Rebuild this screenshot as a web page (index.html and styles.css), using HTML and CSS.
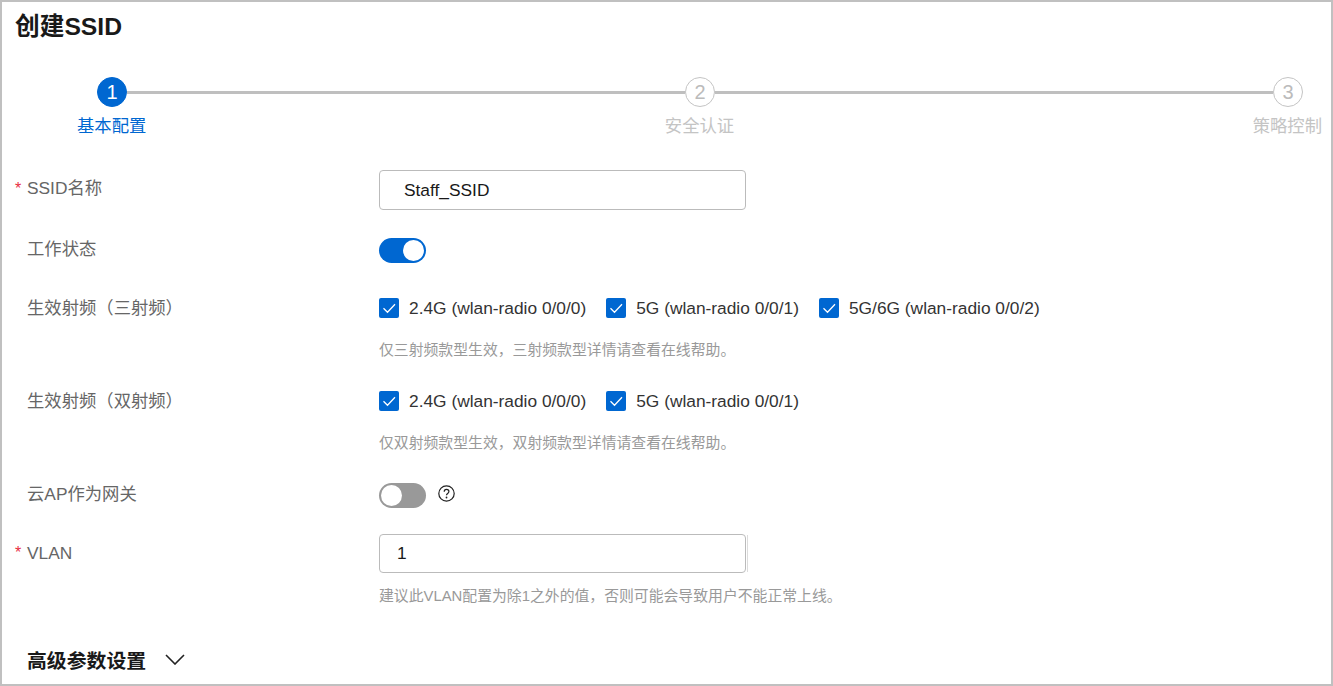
FILE: index.html
```html
<!DOCTYPE html>
<html lang="zh">
<head>
<meta charset="utf-8">
<title>创建SSID</title>
<link rel="stylesheet" href="styles.css">
</head>
<body>
<main class="frame">
  <h1 class="title">创建SSID</h1>
  <section class="stepper">
    <div class="track">
      <span class="dot dot-active">1</span>
      <span class="line"></span>
      <span class="dot">2</span>
      <span class="line"></span>
      <span class="dot">3</span>
    </div>
    <div class="step-labels">
      <span class="step-label step-label-active">基本配置</span>
      <span class="step-label">安全认证</span>
      <span class="step-label">策略控制</span>
    </div>
  </section>
  <form class="form">
    <div class="row row-name">
      <label class="label"><span class="req">*</span>SSID名称</label>
      <div class="control"><div class="input input-name">Staff_SSID</div></div>
    </div>
    <div class="row row-status">
      <label class="label">工作状态</label>
      <div class="control"><span class="switch switch-on"><i class="knob"></i></span></div>
    </div>
    <div class="row row-tri">
      <label class="label">生效射频（三射频）</label>
      <div class="control">
        <div class="checks">
          <span class="check"><svg class="box" viewBox="0 0 20 20"><path d="M4.5 10.2l4 4 7.5-8"/></svg>2.4G (wlan-radio 0/0/0)</span>
          <span class="check"><svg class="box" viewBox="0 0 20 20"><path d="M4.5 10.2l4 4 7.5-8"/></svg>5G (wlan-radio 0/0/1)</span>
          <span class="check"><svg class="box" viewBox="0 0 20 20"><path d="M4.5 10.2l4 4 7.5-8"/></svg>5G/6G (wlan-radio 0/0/2)</span>
        </div>
        <p class="hint">仅三射频款型生效，三射频款型详情请查看在线帮助。</p>
      </div>
    </div>
    <div class="row row-dual">
      <label class="label">生效射频（双射频）</label>
      <div class="control">
        <div class="checks">
          <span class="check"><svg class="box" viewBox="0 0 20 20"><path d="M4.5 10.2l4 4 7.5-8"/></svg>2.4G (wlan-radio 0/0/0)</span>
          <span class="check"><svg class="box" viewBox="0 0 20 20"><path d="M4.5 10.2l4 4 7.5-8"/></svg>5G (wlan-radio 0/0/1)</span>
        </div>
        <p class="hint">仅双射频款型生效，双射频款型详情请查看在线帮助。</p>
      </div>
    </div>
    <div class="row row-gateway">
      <label class="label">云AP作为网关</label>
      <div class="control control-inline">
        <span class="switch switch-off"><i class="knob"></i></span>
        <svg class="help" viewBox="0 0 17 17"><circle cx="8.5" cy="8.5" r="7.7"/><path d="M6.2 6.7c0-1.400 1-2.300 2.300-2.300s2.400.9 2.400 2.200c0 1.900-2.400 1.900-2.400 3.700"/><circle class="help-dot" cx="8.500" cy="12.500" r=".9"/></svg>
      </div>
    </div>
    <div class="row row-vlan">
      <label class="label"><span class="req">*</span>VLAN</label>
      <div class="control">
        <div class="vlan-wrap"><div class="input input-vlan">1</div><span class="spin-edge"></span></div>
        <p class="hint hint-vlan">建议此VLAN配置为除1之外的值，否则可能会导致用户不能正常上线。</p>
      </div>
    </div>
  </form>
  <div class="advanced">
    <h2 class="advanced-title">高级参数设置</h2>
    <svg class="chevron" viewBox="0 0 20 11"><path d="M1 1l9 9 9-9"/></svg>
  </div>
</main>
</body>
</html>
```
FILE: styles.css
```css
* { box-sizing: border-box; }
html, body { margin: 0; height: 100%; background: #fff; }
body {
  font-family: "Liberation Sans", "Noto Sans CJK SC", sans-serif;
  font-size: 16px;
  color: #333;
  overflow: hidden;
}
.frame {
  width: 1333px;
  height: 686px;
  border: 2px solid #c0c0c0;
  padding: 0 0 0 13px;
  overflow: hidden;
}
.title {
  margin: 0;
  height: 50px;
  line-height: 50px;
  font-size: 24.7px;
  font-weight: 700;
  color: #191919;
}
.stepper { margin: 25px 9px 0 62px; }
.track { display: flex; align-items: center; margin: 0 19px 0 20px; }
.dot {
  flex: none;
  width: 30px;
  height: 30px;
  border-radius: 50%;
  border: 1px solid #c4c4c4;
  color: #bbb;
  font-size: 20px;
  line-height: 28px;
  text-align: center;
  background: #fff;
}
.dot-active { background: #0067d1; border-color: #0067d1; color: #fff; }
.line { flex: 1; height: 3px; background: #bfbfbf; }
.step-labels { display: flex; justify-content: space-between; margin-top: 9px; }
.step-label { font-size: 17.33px; line-height: 20px; color: #c4c4c4; white-space: nowrap; }
.step-label-active { color: #0067d1; }
.row { display: flex; align-items: flex-start; }
.label {
  flex: none;
  width: 364px;
  padding-left: 12px;
  position: relative;
  font-size: 17.33px;
  color: #666;
  line-height: 24px;
}
.req { position: absolute; left: 0; top: 0; color: #e8303f; font-size: 16px; }
.row-name { margin-top: 34px; }
.row-name .label { padding-top: 6px; }
.row-status { margin-top: 28px; }
.row-status .label { margin-top: -1px; }
.row-tri { margin-top: 35px; }
.row-tri .label { margin-top: -2px; }
.row-dual { margin-top: 31px; }
.row-dual .label { margin-top: -2px; }
.row-gateway { margin-top: 30px; }
.row-gateway .label { margin-top: -1px; }
.row-vlan { margin-top: 26px; }
.row-vlan .label { padding-top: 7px; }
.row-name .req, .row-vlan .req { top: 7px; }
.input {
  border: 1px solid #bbb;
  border-radius: 4px;
  color: #191919;
  font-size: 17.33px;
  background: #fff;
  width: 367px;
}
.input-name { height: 40px; line-height: 38px; padding-left: 24px; }
.input-vlan { height: 39px; line-height: 37px; padding-left: 17px; }
.vlan-wrap { display: flex; align-items: center; }
.spin-edge { width: 1px; height: 37px; margin-left: 1px; background: #dcdcdc; }
.switch {
  display: flex;
  align-items: center;
  width: 47px;
  height: 25px;
  border-radius: 13px;
  padding: 0 2px;
}
.switch-on { background: #0067d1; justify-content: flex-end; }
.switch-off { background: #999; justify-content: flex-start; }
.knob { width: 21px; height: 21px; border-radius: 50%; background: #fff; }
.checks { display: flex; gap: 20px; height: 20px; }
.check { display: flex; align-items: center; gap: 10px; font-size: 17.33px; line-height: 20px; color: #333; white-space: nowrap; }
.box { width: 20px; height: 20px; background: #0067d1; border-radius: 2px; flex: none; }
.box path { fill: none; stroke: #fff; stroke-width: 1.300; }
.hint { margin: 22px 0 0; font-size: 14.85px; line-height: 20px; color: #999; white-space: nowrap; }
.hint-vlan { margin-top: 13px; }
.control-inline { display: flex; align-items: center; gap: 12px; }
.help { width: 17px; height: 17px; margin-top: -4px; }
.help circle { fill: none; stroke: #222; stroke-width: 1.200; }
.help path { fill: none; stroke: #222; stroke-width: 1.200; }
.help .help-dot { fill: #222; stroke: none; }
.advanced { display: flex; align-items: center; gap: 19px; margin: 41px 0 0 12px; }
.advanced-title { margin: 0; font-size: 19.85px; font-weight: 700; line-height: 28px; color: #191919; }
.chevron { width: 20px; height: 11px; margin-top: -3px; }
.chevron path { fill: none; stroke: #222; stroke-width: 1.600; }
```
